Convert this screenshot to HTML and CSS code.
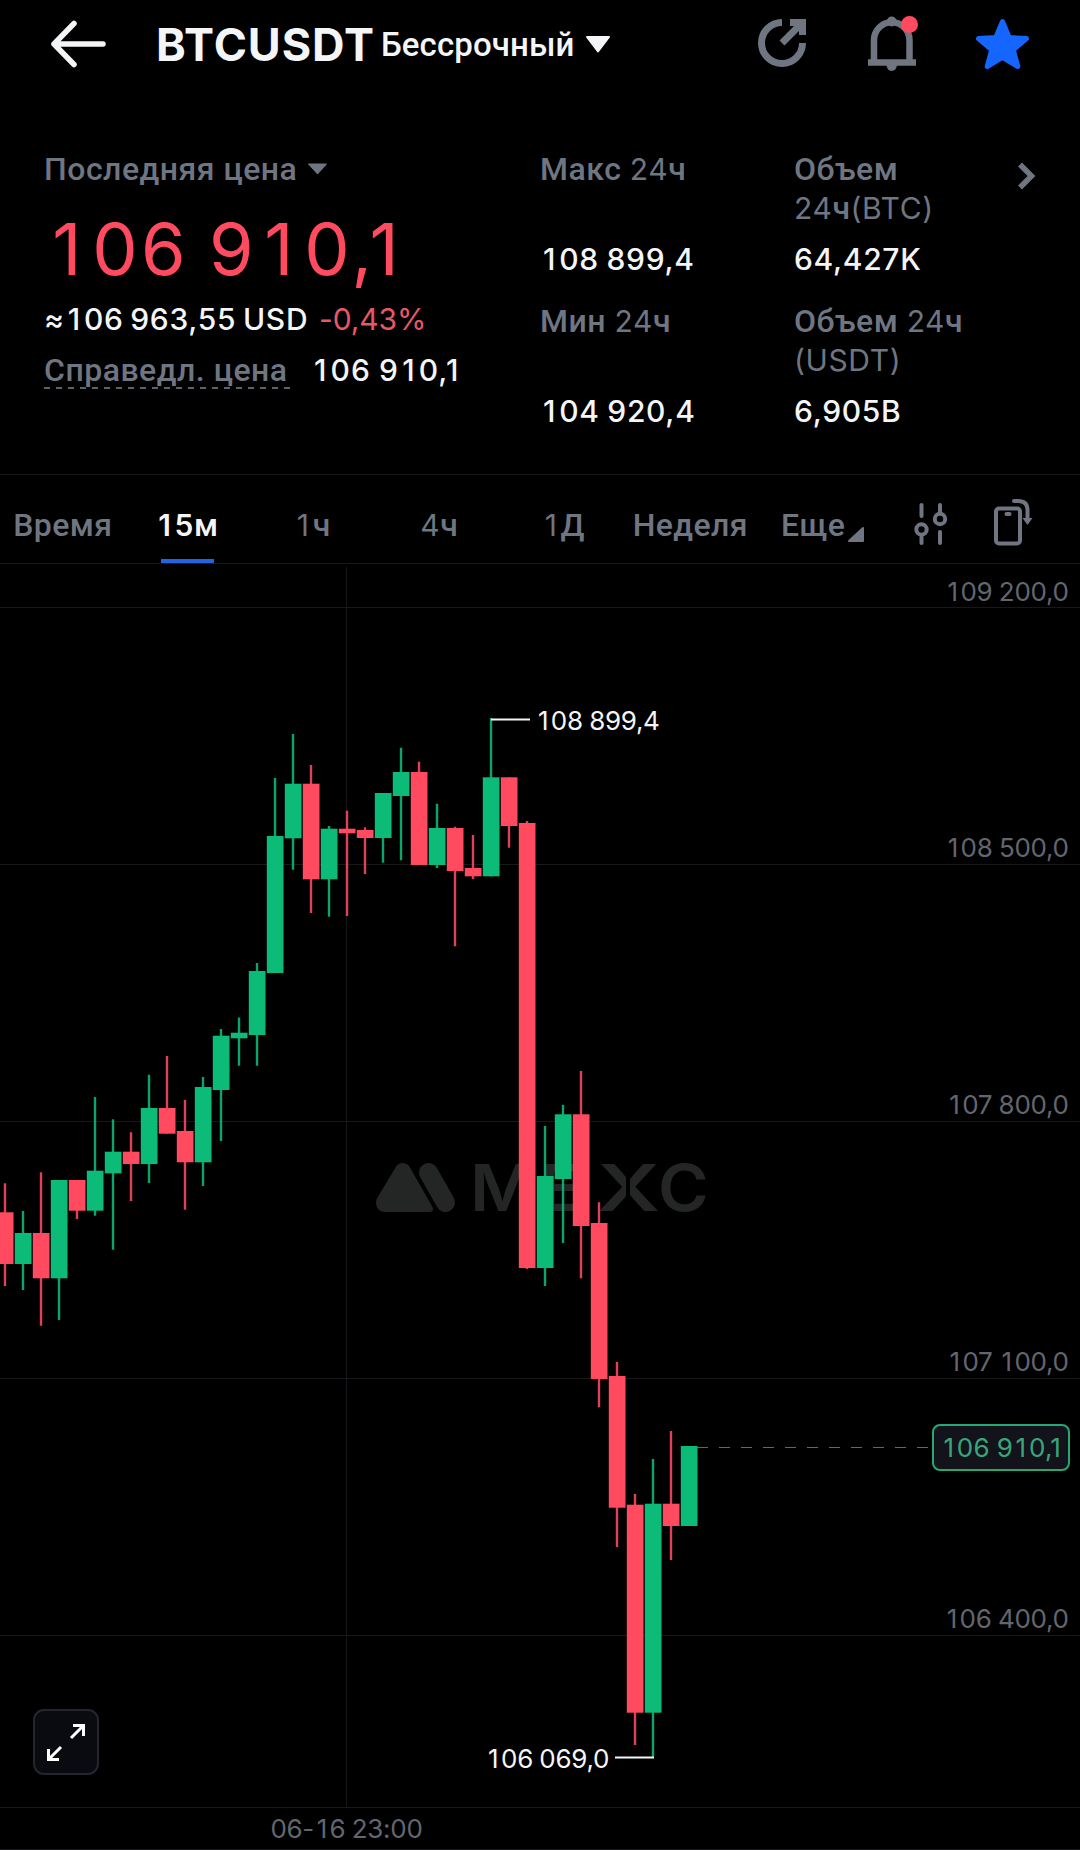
FILE: index.html
```html
<!DOCTYPE html>
<html lang="ru">
<head>
    <meta charset="UTF-8">
    <meta name="viewport" content="width=device-width, initial-scale=1.0">
    <title>BTCUSDT Бессрочный</title>
    <link rel="stylesheet" href="styles.css">
</head>
<body>

<header class="header">
    <svg class="header__back" width="56" height="48" viewBox="0 0 56 48">
        <path d="M24 3.500L4 24L24 44.500M4 24H53"/>
    </svg>
    <h1 class="header__symbol">BTCUSDT</h1>
    <span class="header__type">Бессрочный</span>
    <svg class="header__caret" width="26" height="17" viewBox="0 0 26 17">
        <path d="M2 1H24L13 15.500Z"/>
    </svg>
    <div class="header__actions">
        <svg width="52" height="56" viewBox="0 0 52 56">
            <g class="icon-line icon-line--thick">
                <path d="M26 6.500A20.500 20.500 0 1 0 46.500 27"/>
                <path d="M34 6.500H46.500V19M46 7L26 27"/>
            </g>
        </svg>
        <svg width="52" height="60" viewBox="0 0 52 60">
            <path class="icon-line" d="M8 47V26A17.700 17.700 0 0 1 43.500 26V47M2 48.500H50"/>
            <circle class="icon-fill" cx="25.700" cy="7.500" r="5"/>
            <path class="icon-fill" d="M20.500 51a5.200 6 0 0 0 10.400 0z"/>
            <circle class="header__dot" cx="43.500" cy="10.500" r="8.500"/>
        </svg>
        <svg width="56" height="56" viewBox="0 0 56 56">
            <path class="header__star" d="M26.500 5.500L33.200 21.500L50.500 22.600L37.300 33.800L41.800 50.500L26.500 41.300L11.200 50.500L15.700 33.800L2.500 22.600L19.800 21.500Z"/>
        </svg>
    </div>
</header>

<section class="ticker">
    <div class="ticker__main">
        <div class="ticker__label">Последняя цена
            <svg class="ticker__caret" width="21" height="12" viewBox="0 0 21 12"><path d="M1.500 1H19.500L10.500 11Z"/></svg>
        </div>
        <div class="ticker__price digits">106 910,1</div>
        <div class="ticker__row">
            <span class="ticker__usd digits">≈106 963,55 USD</span>
            <span class="ticker__change">-0,43%</span>
        </div>
        <div class="ticker__row ticker__row--fair">
            <span class="ticker__fair">Справедл. цена</span>
            <span class="ticker__value digits">106 910,1</span>
        </div>
    </div>
    <div class="ticker__col">
        <div class="ticker__label ticker__label--tall">Макс <span class="num">24</span>ч</div>
        <div class="ticker__value digits">108 899,4</div>
        <div class="ticker__label ticker__label--tall">Мин <span class="num">24</span>ч</div>
        <div class="ticker__value digits">104 920,4</div>
    </div>
    <div class="ticker__col">
        <div class="ticker__label ticker__label--tall">Объем<br><span class="num">24</span>ч<span class="num">(BTC)</span></div>
        <div class="ticker__value">64,427K</div>
        <div class="ticker__label ticker__label--tall">Объем <span class="num">24</span>ч<br><span class="num">(USDT)</span></div>
        <div class="ticker__value">6,905B</div>
    </div>
    <svg class="ticker__more" width="20" height="30" viewBox="0 0 20 30">
        <path d="M3 3.500L14.500 15L3 26.500"/>
    </svg>
</section>

<nav class="tabs">
    <a class="tabs__item">Время</a>
    <a class="tabs__item tabs__item--active"><span class="num digits">15</span>м</a>
    <a class="tabs__item"><span class="num digits">1</span>ч</a>
    <a class="tabs__item"><span class="num">4</span>ч</a>
    <a class="tabs__item"><span class="num digits">1</span>Д</a>
    <a class="tabs__item">Неделя</a>
    <div class="tabs__tools">
        <span>Еще</span>
        <svg class="tabs__corner" width="16" height="15" viewBox="0 0 16 15"><path d="M15 1V14H1Z"/></svg>
        <svg class="tabs__settings" width="36" height="44" viewBox="0 0 36 44">
            <path d="M8.500 3V14M8.500 35V41M27 3V10M27 30V41"/>
            <circle cx="8.500" cy="27.500" r="5.200"/>
            <circle cx="27" cy="17" r="5.200"/>
        </svg>
        <svg class="tabs__rotate" width="42" height="48" viewBox="0 0 42 48">
            <rect x="4" y="9.500" width="24" height="35" rx="3"/>
            <path d="M14.500 15H17.500M22 2H26Q35.500 2 35.500 11V20"/>
            <path class="icon-fill" d="M30.500 19H40.500L35.500 26Z"/>
        </svg>
    </div>
</nav>

<main class="chart">
    <svg class="chart__canvas" width="1080" height="1286" viewBox="0 564 1080 1286">
        <g class="chart__grid">
            <path d="M0 607.500H1080M0 864.500H1080M0 1121.500H1080M0 1378.500H1080M0 1635.500H1080"/>
            <path d="M346.500 567V1807M0 1807.500H1080M0 1849.500H1080"/>
        </g>
        <g class="chart__mark">
            <path d="M395.500 1167.500Q398 1163 402.500 1163Q407.500 1163 410 1167.500L432.500 1207Q434.500 1212 429 1212H384Q376 1211 376 1202.500Q376 1200 377.500 1197.500Z"/>
            <path class="chart__pill" d="M428.500 1172.500L445.500 1202.500"/>
            <text transform="translate(470 1211) scale(1.080 1)">M</text>
            <text transform="translate(541 1211) scale(1 1)">E</text>
            <text transform="translate(597 1211) scale(1.350 1)">X</text>
            <text transform="translate(658 1211) scale(1.060 1)">C</text>
        </g>
        <path class="chart__cut" d="M628 1160V1215"/>
        <g id="candles"></g>
        <path class="chart__last" d="M697 1447.500H930"/>
        <path class="chart__pointer" d="M491 719.500H530M615 1757.500H654"/>
        <g class="chart__text">
            <text x="1066" y="601">109 200,0</text>
            <text x="1066" y="857">108 500,0</text>
            <text x="1066" y="1114">107 800,0</text>
            <text x="1066" y="1371">107 100,0</text>
            <text x="1066" y="1628">106 400,0</text>
            <text x="422.500" y="1838">06-16 23:00</text>
            <text class="chart__extreme" x="657" y="730">108 899,4</text>
            <text class="chart__extreme" x="606.500" y="1768">106 069,0</text>
        </g>
    </svg>
    <div class="chart__badge digits">106 910,1</div>
    <button class="chart__expand">
        <svg width="40" height="40" viewBox="0 0 40 40">
            <path d="M27 3.500H37.500V14M37 4L25 16M13 37.500H2.500V27M3 37L15 25"/>
        </svg>
    </button>
</main>

<script>
    // [direction, high, body top, body bottom, low] in chart units
    const candles = [
        ['down', 1183.3, 1212.3, 1264, 1286],
        ['up', 1211, 1233, 1264, 1290],
        ['down', 1172.3, 1233, 1278.3, 1325.7],
        ['up', 1180, 1180, 1278.3, 1320],
        ['down', 1180, 1180, 1210.7, 1219],
        ['up', 1097, 1170.7, 1210.7, 1215.7],
        ['up', 1119.3, 1151.7, 1173.3, 1249.7],
        ['down', 1132.3, 1151.7, 1164, 1201],
        ['up', 1074.7, 1108, 1164, 1183],
        ['down', 1056, 1108, 1133.7, 1133.7],
        ['down', 1100, 1131, 1162.3, 1209.7],
        ['up', 1077, 1087, 1162.3, 1186],
        ['up', 1029, 1035.7, 1090, 1141],
        ['up', 1017.5, 1032.7, 1038.3, 1065.7],
        ['up', 963, 971, 1035, 1065.7],
        ['up', 778, 836, 973, 973],
        ['up', 734, 783.7, 838.3, 869.7],
        ['down', 765, 783.7, 879.3, 913],
        ['up', 826, 828.7, 879.3, 916.7],
        ['down', 810.7, 828.7, 833.3, 916],
        ['down', 827.3, 830, 838, 874],
        ['up', 793, 793, 838, 862.7],
        ['up', 747.7, 772, 796, 860.3],
        ['down', 761.7, 772, 865, 865],
        ['up', 803.7, 828, 865, 868],
        ['down', 826.7, 828, 871, 946.3],
        ['down', 835, 868, 876.3, 879],
        ['up', 718, 777.3, 876.3, 876.3],
        ['down', 777.3, 777.3, 826, 847.7],
        ['down', 821, 823, 1268, 1269],
        ['up', 1126, 1176, 1268, 1286],
        ['up', 1104.7, 1114.3, 1179, 1243],
        ['down', 1071, 1114.3, 1226, 1278.3],
        ['down', 1202.3, 1223, 1379, 1407.3],
        ['down', 1362, 1376, 1507.7, 1547],
        ['down', 1494, 1504.7, 1712.7, 1745],
        ['up', 1459, 1503.7, 1712.7, 1757],
        ['down', 1431, 1503.7, 1526, 1560],
        ['up', 1446, 1446, 1526, 1526]
    ];
    const step = 18;
    const group = document.querySelector('#candles');

    function addRect(x, y, width, height, className) {
        const rect = document.createElementNS('http://www.w3.org/2000/svg', 'rect');
        rect.setAttribute('x', x);
        rect.setAttribute('y', y);
        rect.setAttribute('width', width);
        rect.setAttribute('height', height);
        rect.setAttribute('class', className);
        group.appendChild(rect);
    }

    candles.forEach(([dir, high, top, bottom, low], i) => {
        const x = 5 + i * step;
        addRect(x - 1.2, high, 2.4, low - high, `candle candle--${dir} candle--wick`);
        addRect(x - 8.2, top, 16.7, bottom - top, `candle candle--${dir}`);
    });

    // Give the narrow "1" the same room as the other digits, except after a comma
    document.querySelectorAll('.digits').forEach(el => {
        el.innerHTML = el.textContent.replace(/(?<!,)1/g, '<span class="one">1</span>');
    });
    document.querySelectorAll('.chart__text text').forEach(el => {
        el.innerHTML = el.textContent.replace(/1/g, '<tspan class="one-svg" dx="0.1em">1</tspan>');
    });
</script>

</body>
</html>
```
FILE: styles.css
```css
* {
    box-sizing: border-box;
}
body {
    margin: 0;
    width: 1080px;
    background: #000;
    color: #f4f5f7;
    font-family: Roboto, sans-serif;
    font-weight: 500;
}
svg {
    display: block;
    flex: none;
}
.num {
    font-family: Inter, sans-serif;
    font-size: 30px;
    font-weight: 400;
    letter-spacing: 0.6px;
}
.one {
    margin: 0 0.1em;
}
.one-svg {
    letter-spacing: 0.09em;
}
.icon-line {
    fill: none;
    stroke: #6f7682;
    stroke-width: 6.5;
}
.icon-line--thick {
    stroke-width: 7;
}
.icon-fill {
    fill: #6f7682;
}

/* Header */
.header {
    display: flex;
    align-items: center;
    height: 88px;
    padding-left: 50px;
}
.header__back path {
    fill: none;
    stroke: #f4f5f7;
    stroke-width: 5.5;
    stroke-linecap: round;
    stroke-linejoin: round;
}
.header__symbol {
    margin: 0 0 0 50px;
    width: 225px;
    font-family: Inter, sans-serif;
    font-size: 45px;
    font-weight: 700;
    line-height: 1;
    letter-spacing: 0.9px;
    white-space: nowrap;
}
.header__type {
    font-size: 33px;
    width: 204px;
    letter-spacing: 0.1px;
}
.header__caret path {
    fill: #f4f5f7;
    stroke: #f4f5f7;
    stroke-width: 2;
    stroke-linejoin: round;
}
.header__actions {
    display: flex;
    align-items: center;
    gap: 58px;
    margin-left: 145px;
}
.header__dot {
    fill: #ff4a60;
}
.header__star {
    fill: #1565ff;
    stroke: #1565ff;
    stroke-width: 5;
    stroke-linejoin: round;
}

/* 24h stats */
.ticker {
    display: grid;
    grid-template-columns: 496px 254px 223px 20px;
    height: 387px;
    padding: 61px 0 0 44px;
    border-bottom: 1px solid #17181c;
}
.ticker__label {
    display: flow-root;
    padding-top: 0.5px;
    font-size: 32px;
    line-height: 39px;
    letter-spacing: 0.5px;
    color: #6f7682;
}
.ticker__label--tall {
    height: 78px;
}
.ticker__caret {
    display: inline-block;
    vertical-align: 5px;
    margin-left: 1px;
}
.ticker__caret path {
    fill: #6f7682;
    stroke: #6f7682;
    stroke-linejoin: round;
}
.ticker__price {
    margin: 16.5px 0 6px 1px;
    font-family: Inter, sans-serif;
    font-size: 72px;
    font-weight: 400;
    line-height: 88px;
    letter-spacing: 3.5px;
    word-spacing: -4px;
    color: #ff4a60;
}
.ticker__row {
    display: flex;
    line-height: 40px;
}
.ticker__row--fair {
    margin-top: 11px;
}
.ticker__usd,
.ticker__change,
.ticker__value {
    font-family: Inter, sans-serif;
    font-size: 30px;
    font-weight: 500;
    letter-spacing: 0.7px;
    word-spacing: -1px;
    line-height: 40px;
}
.ticker__row--fair .ticker__value {
    letter-spacing: 1.1px;
}
.ticker__usd {
    width: 275px;
    word-spacing: -2px;
    white-space: nowrap;
}
.ticker__change {
    font-weight: 400;
    letter-spacing: -0.1px;
    color: #e8566a;
}
.ticker__fair {
    width: 246px;
    height: 39px;
    margin-right: 21px;
    font-size: 32px;
    letter-spacing: 0.5px;
    color: #6f7682;
    background: repeating-linear-gradient(90deg, #5c626d 0 6px, transparent 6px 12px) 0 100% / 100% 2px no-repeat;
}
.ticker__col .ticker__value {
    margin: 12px 0 22px;
}
.ticker__more {
    margin-top: 12px;
}
.ticker__more path {
    fill: none;
    stroke: #6f7682;
    stroke-width: 5.5;
}

/* Time frames */
.tabs {
    display: grid;
    grid-template-columns: repeat(6, 125.5px) 1fr;
    height: 89px;
    border-bottom: 1px solid #17181c;
    font-size: 32px;
    line-height: 100px;
    letter-spacing: 0.4px;
    color: #6f7682;
}
.tabs__item {
    position: relative;
    text-align: center;
    height: 88px;
}
.tabs .one {
    margin-left: 0;
}
.tabs__item--active {
    color: #f4f5f7;
}
.tabs__item--active .num {
    font-weight: 600;
}
.tabs__item--active::after {
    content: "";
    position: absolute;
    left: 35px;
    bottom: 0;
    width: 53px;
    height: 4px;
    background: #2462e6;
}
.tabs__tools {
    display: flex;
    padding-left: 28px;
    height: 88px;
}
.tabs__corner {
    margin: 52px 0 0 3px;
}
.tabs__corner path {
    fill: #6f7682;
    stroke: #6f7682;
    stroke-width: 2;
    stroke-linejoin: round;
}
.tabs__settings {
    margin: 27px 0 0 49px;
}
.tabs__rotate {
    margin: 24px 0 0 43px;
}
.tabs__settings,
.tabs__rotate {
    fill: none;
    stroke: #6f7682;
    stroke-width: 4;
    stroke-linecap: round;
}
.tabs__rotate .icon-fill {
    stroke: none;
}

/* Chart */
.chart {
    position: relative;
    height: 1286px;
}
.chart__grid {
    fill: none;
    stroke: #17181c;
}
.chart__mark {
    fill: #242626;
    font: 600 65px Inter, sans-serif;
}
.chart__pill {
    stroke: #242626;
    stroke-width: 19;
    stroke-linecap: round;
}
.chart__cut {
    stroke: #000;
    stroke-width: 4;
}
.candle--up {
    fill: #0dbb79;
}
.candle--down {
    fill: #ff4a60;
}
.candle--wick {
    opacity: 0.88;
}
.chart__last {
    stroke: #2c8659;
    stroke-dasharray: 11 11;
}
.chart__pointer {
    stroke: #f4f5f7;
    stroke-width: 2;
}
.chart__text,
.chart__badge {
    font-family: Inter, sans-serif;
    font-size: 26px;
    font-weight: 400;
    letter-spacing: -0.3px;
    word-spacing: -0.6px;
}
.chart__text {
    fill: #62666f;
    text-anchor: end;
}
.chart__extreme {
    fill: #f4f5f7;
}
.chart__badge {
    position: absolute;
    left: 932px;
    top: 860px;
    width: 138px;
    height: 47px;
    border: 2.5px solid #27a775;
    border-radius: 8px;
    background: #13141b;
    color: #3aa57a;
    line-height: 44px;
    letter-spacing: 0.2px;
    text-align: center;
}
.chart__expand {
    position: absolute;
    left: 33px;
    top: 1145px;
    display: grid;
    place-items: center;
    width: 66px;
    height: 66px;
    padding: 0;
    border: 2px solid #24262f;
    border-radius: 11px;
    background: #0a0b10;
}
.chart__expand path {
    fill: none;
    stroke: #fff;
    stroke-width: 3;
}
```
